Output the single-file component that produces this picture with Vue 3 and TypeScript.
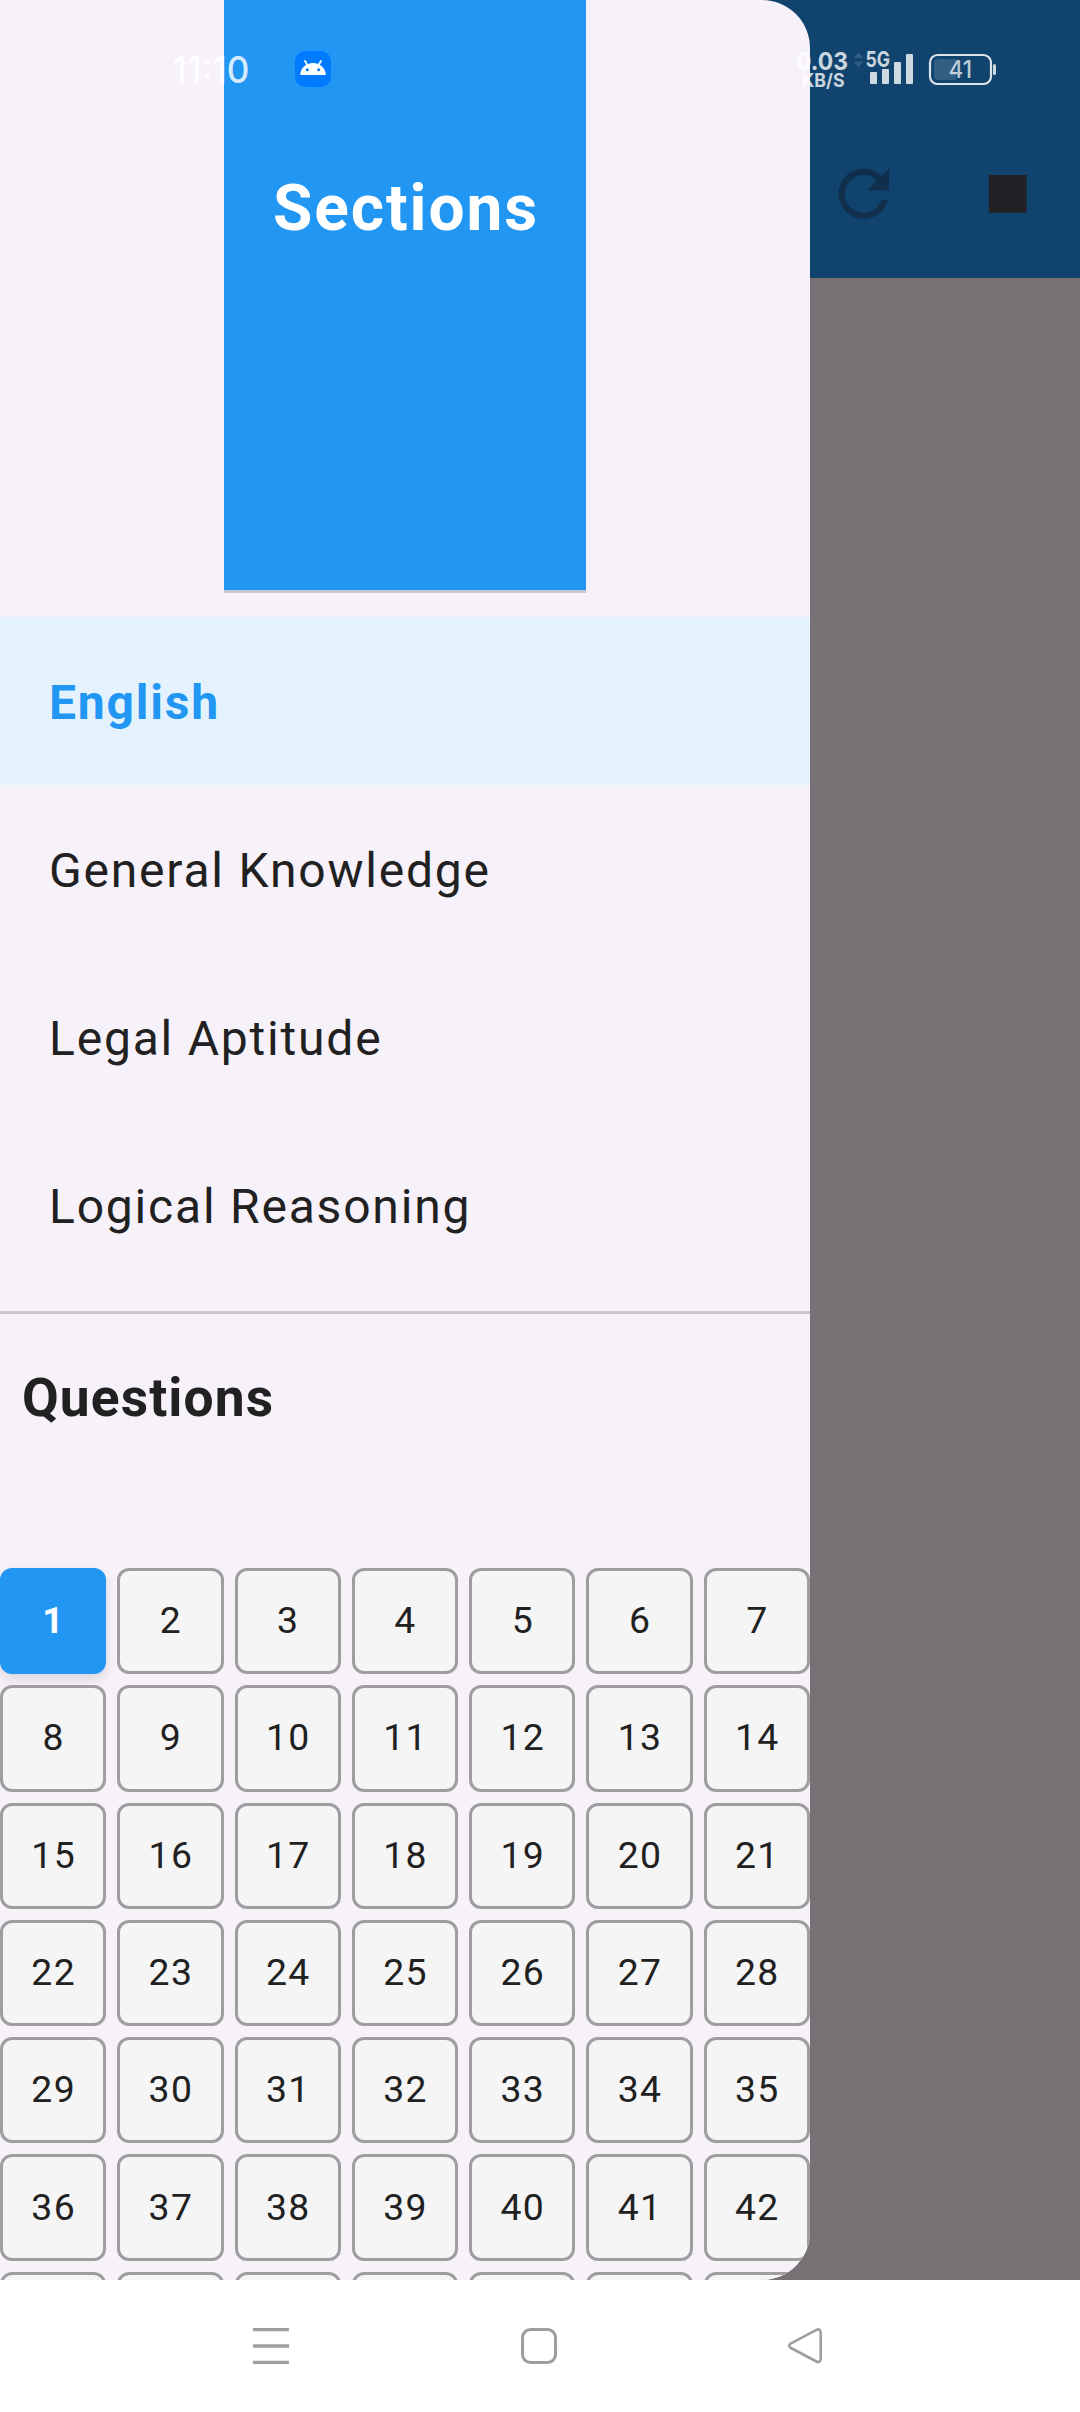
<script setup lang="ts">
const sections: string[] = ['English', 'General Knowledge', 'Legal Aptitude', 'Logical Reasoning']
const activeSection = 0
const currentQuestion = 1
const questions: number[] = Array.from({ length: 49 }, (_, i) => i + 1)
</script>

<template>
  <div class="screen">
    <div class="app">
      <aside class="drawer">
        <header class="drawer-header"><span class="title">Sections</span></header>
        <nav class="sections">
          <div
            v-for="(name, i) in sections"
            :key="name"
            class="section"
            :class="{ active: i === activeSection }"
          >
            <span>{{ name }}</span>
          </div>
        </nav>
        <div class="divider"></div>
        <h2 class="questions-title">Questions</h2>
        <div class="grid">
          <div
            v-for="n in questions"
            :key="n"
            class="cell"
            :class="{ current: n === currentQuestion }"
          >
            <span>{{ n }}</span>
          </div>
        </div>
      </aside>
      <main class="behind">
        <div class="appbar">
          <svg class="refresh" viewBox="0 0 24 24">
            <path
              d="M17.65 6.35C16.2 4.9 14.21 4 12 4c-4.42 0-7.99 3.58-7.99 8s3.57 8 7.99 8c3.73 0 6.84-2.55 7.73-6h-2.08c-.82 2.33-3.04 4-5.65 4-3.31 0-6-2.69-6-6s2.69-6 6-6c1.66 0 3.14.69 4.22 1.78L13 11h7V4l-2.35 2.35z"
            />
          </svg>
          <svg class="stop" viewBox="0 0 24 24"><path d="M6 6h12v12H6z" /></svg>
        </div>
      </main>
    </div>

    <div class="statusbar">
      <svg class="clock" width="170" height="60" viewBox="165 40 170 60">
        <text x="172.500" y="82.5" font-size="36.5" font-weight="500" textLength="77" lengthAdjust="spacingAndGlyphs" fill="#fff" fill-opacity=".82">11:10</text>
        <rect x="295" y="51" width="36" height="36" rx="10" fill="#007bff" />
        <path d="M300.300 75a12.700 12 0 0 1 25.400 0z" fill="#fff" />
        <path d="M305 61l3 5M321 61l-3 5" stroke="#fff" stroke-width="1.800" stroke-linecap="round" />
        <circle cx="307.300" cy="69.700" r="1.500" fill="#007bff" />
        <circle cx="318.600" cy="69.700" r="1.500" fill="#007bff" />
      </svg>
      <svg class="indicators" width="205" height="60" viewBox="795 40 205 60">
        <g fill="#fff" fill-opacity=".8">
          <text x="796" y="70" font-size="24.800" font-weight="700" textLength="52" lengthAdjust="spacingAndGlyphs">0.03</text>
          <text x="801.500" y="87.300" font-size="18.500" font-weight="700" textLength="43" lengthAdjust="spacingAndGlyphs">KB/S</text>
          <text x="865.500" y="67.300" font-size="21.500" font-weight="700" textLength="24.500" lengthAdjust="spacingAndGlyphs">5G</text>
          <rect x="870" y="72" width="7" height="12" rx="1" />
          <rect x="882" y="69" width="7" height="15" rx="1" />
          <rect x="894" y="62" width="7" height="22" rx="1" />
          <rect x="906" y="54" width="7" height="30" rx="1" />
          <rect x="993" y="64" width="3" height="11" rx="1.500" />
        </g>
        <path d="M853.500 58l5-5.500 5 5.500zM853.500 61.500h10l-5 5.500z" fill="#fff" fill-opacity=".14" />
        <rect x="930" y="55" width="61" height="29" rx="7.500" fill="none" stroke="#fff" stroke-opacity=".85" stroke-width="2.200" />
        <path d="M956 59h-18a4 4 0 0 0-4 4v13a4 4 0 0 0 4 4h18z" fill="#fff" fill-opacity=".14" />
        <text x="948.500" y="78.300" font-size="24" font-weight="500" textLength="23.500" lengthAdjust="spacingAndGlyphs" fill="#fff" fill-opacity=".72">41</text>
      </svg>
    </div>

    <footer class="navbar">
      <svg width="36" height="36" viewBox="0 0 36 36">
        <path d="M0 1.700h36M0 18h36M0 34.300h36" stroke="#9e9e9e" stroke-width="3.300" />
      </svg>
      <svg width="36" height="36" viewBox="0 0 36 36">
        <rect x="1.500" y="1.500" width="33" height="33" rx="8" fill="none" stroke="#9e9e9e" stroke-width="3" />
      </svg>
      <svg width="36" height="36" viewBox="1 0 36 36">
        <path
          d="M28.500 2.300Q33.700-.5 33.700 5V30.500Q33.700 36 28.500 33L4 20Q.5 17.700 4 15.300Z"
          fill="none"
          stroke="#9e9e9e"
          stroke-width="2.600"
          stroke-linejoin="round"
        />
      </svg>
    </footer>
  </div>
</template>

<style>
body {
  margin: 0;
}
</style>

<style scoped>
.screen {
  position: relative;
  display: flex;
  flex-direction: column;
  width: 1080px;
  height: 2412px;
  overflow: hidden;
  background: #fff;
  font-family: Roboto, sans-serif;
  color: #212121;
}
.app {
  display: flex;
  height: 2280px;
  background: linear-gradient(#10446e 278px, #777175 278px);
}
.drawer {
  box-sizing: border-box;
  width: 810px;
  height: 2280px;
  overflow: hidden;
  border-radius: 0 48px 48px 0;
  background: #f7f2fa;
}
.drawer-header {
  box-sizing: border-box;
  width: 362px;
  height: 593px;
  margin: 0 auto 24px;
  padding: 171px 0 0 49px;
  border-bottom: 3px solid #c9c4cf;
  background: #2196f3;
}
.title {
  display: block;
  font-size: 64px;
  line-height: 75px;
  font-weight: 700;
  letter-spacing: 1.900px;
  color: #fff;
  white-space: nowrap;
}
.section {
  box-sizing: border-box;
  display: flex;
  align-items: center;
  height: 168px;
  padding: 2px 0 0 49px;
  font-size: 48px;
  letter-spacing: 1.8px;
}
.section.active {
  background: #e3f2fd;
  color: #2196f3;
  font-weight: 700;
}
.divider {
  height: 3px;
  margin: 22px 0 23px;
  background: #cac4d0;
}
.questions-title {
  box-sizing: border-box;
  margin: 0;
  padding: 29px 0 0 22px;
  height: 231px;
  font-size: 53.330px;
  line-height: 64px;
  font-weight: 700;
  letter-spacing: 1.100px;
}
.grid {
  display: grid;
  grid-template-columns: repeat(7, 1fr);
  grid-auto-rows: 106.300px;
  gap: 11px;
}
.cell {
  display: flex;
  align-items: center;
  justify-content: center;
  box-sizing: border-box;
  padding: 0 0 2px 1px;
  border: 3px solid #9e9e9e;
  border-radius: 12px;
  background: #f5f5f5;
  font-size: 37.330px;
  letter-spacing: 1.330px;
}
.cell.current {
  border-color: #2196f3;
  background: #2196f3;
  color: #fff;
  font-weight: 700;
  box-shadow: 0 5px 11px rgba(0, 0, 0, 0.12);
}
.behind {
  flex: 1;
}
.appbar {
  display: flex;
  align-items: center;
  height: 278px;
  padding: 110px 0 0 16.400px;
  box-sizing: border-box;
}
.appbar svg {
  width: 75.500px;
  height: 75.500px;
}
.refresh {
  fill: #0f2f4c;
}
.stop {
  margin-left: 68.200px;
  fill: #222125;
}
.statusbar {
  position: absolute;
  inset: 40px 0 auto 0;
  display: flex;
  justify-content: space-between;
  height: 60px;
  padding: 0 80px 0 165px;
  font-family: Inter, sans-serif;
}
.navbar {
  display: flex;
  justify-content: space-between;
  align-items: flex-start;
  height: 84px;
  padding: 48px 256px 0 253px;
}
</style>
